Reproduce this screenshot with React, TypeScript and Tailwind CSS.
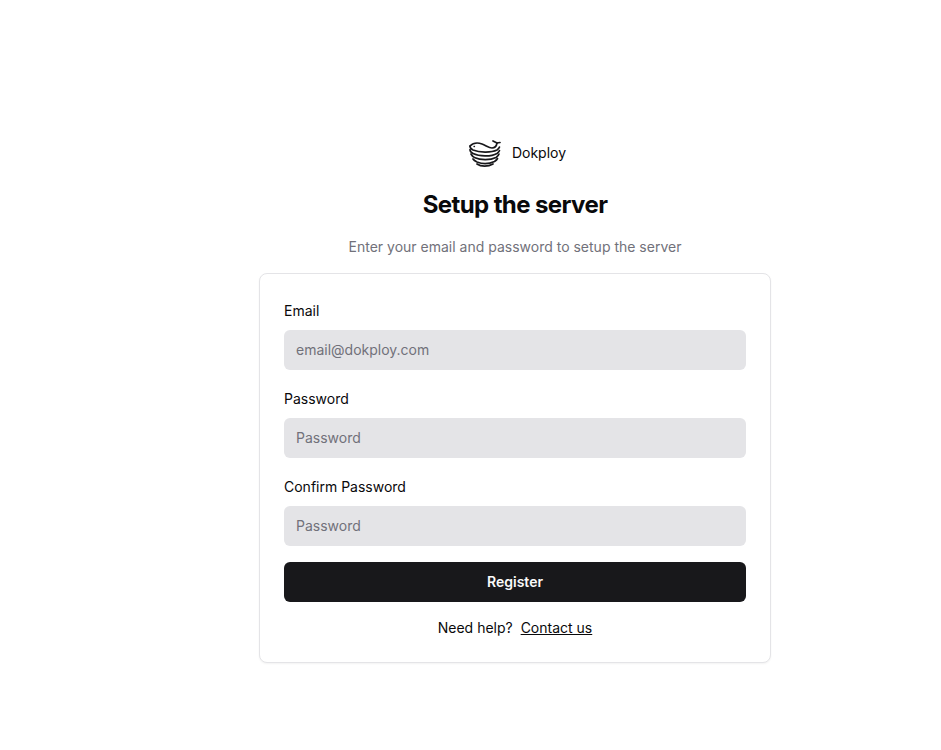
const Logo = () => (
  <svg width="33" height="28" viewBox="-1 -1 33 28" fill="none" stroke="#18181b" strokeWidth="1.7" strokeLinecap="round" strokeLinejoin="round">
    <path d="M1 6C4 3 9 2.500 13 4C17 5.500 20 8 23 8C26 8 27.500 6 28 3" />
    <path d="M28 3L24 1M28 3L31 2.500" />
    <path d="M1 6C1 8 2 9 4 10C10 12.500 22 13 28 10C29.500 9 30 8.500 30.500 7" />
    <path d="M1 9.500C1 11.500 2 12.500 4 13.500C10 16.500 22 17 28 13.500C29.500 12.500 30 12 30.500 10.500" />
    <path d="M2 14C3 16 4 17 6 17.800C11 20 21 20.500 27 17.500C28.500 16.500 29.500 15.500 30 14" />
    <path d="M4 19C5 20.500 6 21 8 22C13 24 20 24 25.500 21.500C27 20.500 28 19.500 28.500 18.500" />
    <path d="M8 24C12 26.800 19 26.800 24 24" />
    <path d="M5 6.500L5.500 6.500" strokeWidth="1.300" />
  </svg>
);

const Field = ({ label, placeholder, type }: { label: string; placeholder: string; type: string }) => (
  <div className="flex flex-col gap-3 pt-1.5">
    <label className="text-sm leading-none font-normal text-[#09090b]">{label}</label>
    <input
      type={type}
      placeholder={placeholder}
      className="h-10 w-full rounded-md bg-[#e4e4e7] px-3 pt-2 pb-2.5 text-sm text-[#09090b] placeholder:text-[#71717a] outline-none"
    />
  </div>
);

export default function App() {
  return (
    <div className="min-h-screen bg-white pl-[259px] pt-[138px] font-['Inter',sans-serif]">
      <div className="flex w-[512px] flex-col items-center">
        <div className="flex h-[30px] items-center gap-[11px] pl-1">
          <Logo />
          <span className="text-sm font-normal text-[#09090b]">Dokploy</span>
        </div>
        <h1 className="mt-[21px] text-2xl font-bold tracking-tight text-[#09090b]">Setup the server</h1>
        <p className="mt-4 text-sm text-[#71717a]">Enter your email and password to setup the server</p>
        <div className="mt-4 w-full rounded-lg border border-[#e4e4e7] bg-white p-6 shadow-xs">
          <div className="flex flex-col gap-4">
            <Field label="Email" placeholder="email@dokploy.com" type="email" />
            <Field label="Password" placeholder="Password" type="password" />
            <Field label="Confirm Password" placeholder="Password" type="password" />
            <button className="h-10 w-full rounded-md bg-[#18181b] text-sm font-semibold text-[#fafafa]">Register</button>
          </div>
          <p className="mt-4 text-center text-sm text-[#09090b]">
            Need help? <a href="#" className="ml-1 underline">Contact us</a>
          </p>
        </div>
      </div>
    </div>
  );
}
